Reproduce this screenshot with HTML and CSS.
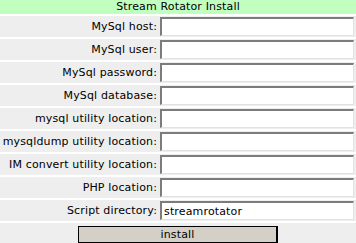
FILE: index.html
```html
<!DOCTYPE html>
<html lang="en">
<head>
    <meta charset="UTF-8">
    <title>Stream Rotator Install</title>
    <link rel="stylesheet" href="styles.css">
</head>
<body>
    <div class="title">Stream Rotator Install</div>
    <form class="install-form">
        <table class="install-table">
            <tr>
                <td class="label">MySql host:</td>
                <td class="field"><input type="text" name="dbhost"></td>
            </tr>
            <tr>
                <td class="label">MySql user:</td>
                <td class="field"><input type="text" name="dbuser"></td>
            </tr>
            <tr>
                <td class="label">MySql password:</td>
                <td class="field"><input type="text" name="dbpass"></td>
            </tr>
            <tr>
                <td class="label">MySql database:</td>
                <td class="field"><input type="text" name="dbname"></td>
            </tr>
            <tr>
                <td class="label">mysql utility location:</td>
                <td class="field"><input type="text" name="mysql"></td>
            </tr>
            <tr>
                <td class="label">mysqldump utility location:</td>
                <td class="field"><input type="text" name="mysqldump"></td>
            </tr>
            <tr>
                <td class="label">IM convert utility location:</td>
                <td class="field"><input type="text" name="convert"></td>
            </tr>
            <tr>
                <td class="label">PHP location:</td>
                <td class="field"><input type="text" name="php"></td>
            </tr>
            <tr>
                <td class="label">Script directory:</td>
                <td class="field"><input type="text" name="dir" value="streamrotator"></td>
            </tr>
            <tr>
                <td class="submit-cell" colspan="2"><button type="submit">install</button></td>
            </tr>
        </table>
    </form>
</body>
</html>
```

FILE: styles.css
```css
body {
    margin: 0;
    font-family: "DejaVu Sans", Verdana, sans-serif;
    font-size: 11px;
    letter-spacing: 0.15px;
    color: #000;
    background-color: #fff;
}
.title {
    background-color: #c0ffc0;
    height: 14px;
    line-height: 14px;
    text-align: center;
}
.install-form {
    margin: 0;
}
.install-table {
    width: 356px;
    border-spacing: 0 2px;
    table-layout: fixed;
}
.install-table td {
    background-color: #eeeeee;
    height: 21px;
    padding: 0;
}
.label {
    width: 157px;
    padding-right: 2px !important;
    text-align: right;
    white-space: nowrap;
}
.field {
    padding-left: 1px !important;
}
.field input {
    display: block;
    box-sizing: border-box;
    width: 194px;
    height: 19px;
    margin: 0;
    padding: 0 2px;
    border-style: solid;
    border-width: 2px 1px 1px 2px;
    border-color: #7c7c7c #e2e2e2 #e2e2e2 #7c7c7c;
    background-color: #fff;
    font-family: "DejaVu Sans", Verdana, sans-serif;
    font-size: 11px;
    letter-spacing: 0.15px;
    color: #000;
    outline: none;
}
.submit-cell {
    text-align: center;
    vertical-align: bottom;
}
.submit-cell button {
    box-sizing: border-box;
    width: 200px;
    height: 18px;
    margin: 2px 0 0 0;
    padding: 0;
    border: 1px solid #000;
    border-width: 1px 2px 2px 1px;
    background-color: #d4d0c8;
    font-family: "DejaVu Sans", Verdana, sans-serif;
    font-size: 11px;
    letter-spacing: 0.15px;
    color: #000;
    line-height: 14px;
}
```
